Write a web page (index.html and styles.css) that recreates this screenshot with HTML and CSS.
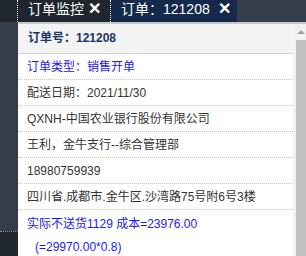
FILE: index.html
```html
<!DOCTYPE html>
<html lang="zh-CN">
<head>
    <meta charset="UTF-8">
    <meta name="viewport" content="width=device-width, initial-scale=1.0">
    <title>订单</title>
    <link rel="stylesheet" href="styles.css">
</head>
<body>
    <div class="tabbar">
        <div class="corner"></div>
        <div class="tab">订单监控<span class="close">✕</span></div>
        <div class="tab active">订单：121208<span class="close">✕</span></div>
    </div>
    <div class="main">
        <div class="side">
            <div class="sidetop"></div>
            <div class="sidebottom"></div>
        </div>
        <div class="content">
            <div class="head">订单号：121208</div>
            <div class="row blue">订单类型：销售开单</div>
            <div class="row">配送日期：2021/11/30</div>
            <div class="row">QXNH-中国农业银行股份有限公司</div>
            <div class="row">王利，金牛支行--综合管理部</div>
            <div class="row">18980759939</div>
            <div class="row">四川省.成都市.金牛区.沙湾路75号附6号3楼</div>
            <div class="last blue">
                <p>实际不送货1129 成本=23976.00</p>
                <p class="sub">(=29970.00*0.8)</p>
            </div>
        </div>
        <div class="scroll">
            <div class="arrow"></div>
            <div class="thumb"></div>
        </div>
    </div>
</body>
</html>
```

FILE: styles.css
```css
* {
    margin: 0;
    box-sizing: border-box;
}
body {
    width: 306px;
    height: 256px;
    overflow: hidden;
    font-family: "Liberation Sans", "Noto Sans CJK SC", sans-serif;
    font-size: 12px;
    color: #333;
    background: #fff;
}
.tabbar {
    display: flex;
    height: 22px;
    background-color: #343f4a;
    color: #fff;
}
.corner {
    width: 18px;
    background-color: #20262e;
    border-right: 1px dotted #fff;
}
.tab {
    background-color: #20262e;
    padding: 0 9px 0 10px;
    font-size: 14px;
    line-height: 18px;
    border-right: 1px dotted #fff;
    white-space: nowrap;
}
.tab.active {
    background-color: #14294b;
    border-right: none;
    padding-right: 6px;
}
.close {
    display: inline-block;
    width: 13px;
    margin-left: 4px;
    text-align: center;
    font-size: 16px;
    font-weight: bold;
    vertical-align: top;
}
.active .close {
    margin-left: 8px;
}
.main {
    display: flex;
    height: 234px;
}
.side {
    width: 18px;
    display: flex;
    flex-direction: column;
}
.sidetop {
    height: 209px;
    background-color: #343e48;
}
.sidebottom {
    flex: 1;
    background-color: #21272e;
    border-top: 1px dotted #8a9096;
}
.content {
    flex: 1;
    border-top: 2px solid #c9c9c9;
}
.head {
    height: 30px;
    background-color: #f3f3f3;
    border-bottom: 1px solid #d2d2d2;
    padding-left: 10px;
    line-height: 29px;
    font-weight: bold;
    color: #1d3566;
}
.row {
    height: 26px;
    line-height: 26px;
    padding-left: 9px;
    border-bottom: 1px dotted #c4c4c4;
    white-space: nowrap;
}
.blue {
    color: #1a1af2;
}
.last {
    padding: 8px 0 0 9px;
    line-height: 13px;
}
.sub {
    margin-top: 10px;
    padding-left: 8px;
}
.scroll {
    width: 13px;
    background-color: #f1f1f1;
    border-top: 2px solid #c9c9c9;
    padding-left: 3px;
}
.arrow {
    width: 0;
    height: 0;
    margin: 6px 0 0 1px;
    border-left: 4px solid transparent;
    border-right: 4px solid transparent;
    border-bottom: 4px solid #a3a3a3;
}
.thumb {
    margin-top: 6px;
    height: 216px;
    background-color: #c1c1c1;
}
```
